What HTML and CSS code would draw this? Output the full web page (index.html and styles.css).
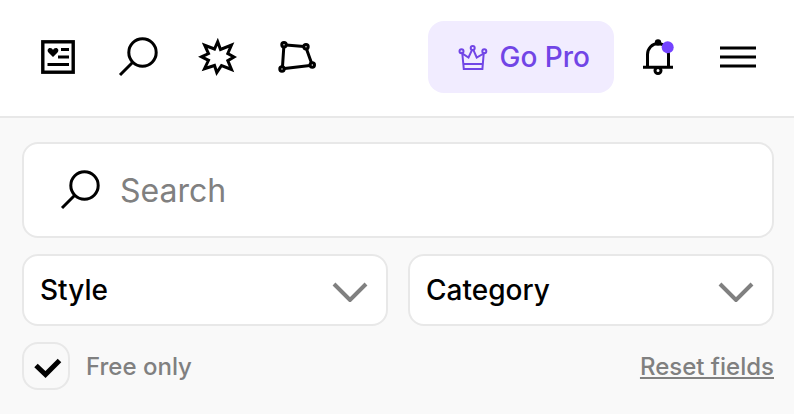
FILE: index.html
```
<!DOCTYPE html>
<html lang="en">
<head>
<meta charset="UTF-8">
<meta name="viewport" content="width=device-width, initial-scale=1">
<title>Search</title>
<link rel="stylesheet" href="styles.css">
</head>
<body>
    <header class="header">
        <nav class="nav">
            <a href="#news" class="icon-link" aria-label="News">
                <svg class="icon" viewBox="0 0 40 40">
                    <rect x="4.800" y="4.800" width="30.400" height="30.400" stroke-width="3.400"/>
                    <path d="M23 12.500h8M20 20h11M9.500 27.500h21.500"/>
                    <path class="solid" d="M15 20l-4.500-4.500c-1.800-2-.6-4.500 1.500-4.500 1.500 0 2.500.8 3 2 .5-1.200 1.500-2 3-2 2.100 0 3.300 2.500 1.500 4.500z"/>
                </svg>
            </a>
            <a href="#search" class="icon-link" aria-label="Search">
                <svg class="icon" viewBox="0 0 40 40">
                    <circle cx="24.500" cy="15.500" r="13.700"/>
                    <path d="M14.500 25.500L2 38"/>
                </svg>
            </a>
            <a href="#new" class="icon-link" aria-label="New">
                <svg class="icon" viewBox="0 0 40 40">
                    <path stroke-miterlimit="10" d="M19.700 4.700L22.500 12.500L33.500 8L29.800 16.500L36 20L29.800 23.700L33.500 32.500L23.500 28.500L18.800 35.500L16.500 28.500L6.500 31.700L10.500 23.300L3.500 19.800L10.500 16.500L6.700 8.300L16.500 12z"/>
                </svg>
            </a>
            <a href="#shapes" class="icon-link" aria-label="Shapes">
                <svg class="icon" viewBox="0 0 40 40">
                    <path d="M8 8l18 1.500M28.500 12l5 14M32 28.500L6.500 31.500M4.500 29.500L5.800 10"/>
                    <circle cx="6" cy="7.700" r="2.200"/>
                    <circle cx="28" cy="9.700" r="2.200"/>
                    <circle cx="34.300" cy="28" r="2.200"/>
                    <circle cx="4" cy="32" r="2.200"/>
                </svg>
            </a>
        </nav>
        <div class="account">
            <a href="#pro" class="pro">
                <svg class="crown" viewBox="0 0 30 30">
                    <circle cx="3.500" cy="9.300" r="2"/>
                    <circle cx="14.700" cy="6" r="2"/>
                    <circle cx="26.300" cy="9.300" r="2"/>
                    <path d="M4.300 11.500L5.800 27h18.600L25.700 11.500L18.700 15.500L15.500 8.200h-1.600L10.500 15.500zM5.500 22h19"/>
                </svg>
                Go Pro
            </a>
            <button type="button" class="icon-link" aria-label="Notifications">
                <svg class="icon" viewBox="0 0 40 40">
                    <path d="M9.500 30V17.500a10.500 11 0 0 1 21 0V30M5 30.300h30"/>
                    <circle cx="20" cy="33.500" r="3"/>
                    <circle class="solid" cx="20" cy="5.500" r="3.200"/>
                    <circle class="dot" cx="29.700" cy="10.300" r="6"/>
                </svg>
            </button>
            <button type="button" class="icon-link menu" aria-label="Menu">
                <svg class="icon" viewBox="0 0 40 40">
                    <path d="M2 11h36M2 20h36M2 29h36"/>
                </svg>
            </button>
        </div>
    </header>
    <form class="filters">
        <label class="search">
            <svg class="icon" viewBox="0 0 40 40">
                <circle cx="24.500" cy="15.500" r="13.700"/>
                <path d="M14.500 25.500L2 38"/>
            </svg>
            <input type="text" name="q" placeholder="Search" aria-label="Search">
        </label>
        <div class="selects">
            <div class="select">
                <select name="style" aria-label="Style">
                    <option>Style</option>
                </select>
                <svg class="chevron" viewBox="0 0 36 20"><path d="M2 2l16 16L34 2"/></svg>
            </div>
            <div class="select">
                <select name="category" aria-label="Category">
                    <option>Category</option>
                </select>
                <svg class="chevron" viewBox="0 0 36 20"><path d="M2 2l16 16L34 2"/></svg>
            </div>
        </div>
        <div class="options">
            <label class="free">
                <span class="checkbox">
                    <input type="checkbox" name="free" checked>
                    <svg class="check" viewBox="0 0 44 44"><path d="M12 21.500l9.500 9L35.500 16.500"/></svg>
                </span>
                Free only
            </label>
            <button type="reset" class="reset">Reset fields</button>
        </div>
    </form>
</body>
</html>
```
FILE: styles.css
```
* {
    box-sizing: border-box;
}

body {
    margin: 0;
    background: #fff;
    color: #000;
    font-family: Inter, sans-serif;
    font-size: 28px;
    font-weight: 500;
}

button, input, select {
    margin: 0;
    padding: 0;
    border: 0;
    background: none;
    color: inherit;
    font: inherit;
    appearance: none;
}

button, select, label {
    cursor: pointer;
}

svg {
    display: block;
    flex: none;
    fill: none;
    stroke: currentColor;
    stroke-width: 3;
}

/* header */
.header {
    display: flex;
    align-items: center;
    justify-content: space-between;
    padding: 21px 36px 23px 38px;
    border-bottom: 2px solid #e8e8e8;
}

.nav {
    display: flex;
    gap: 40px;
}

.account {
    display: flex;
    align-items: center;
    gap: 24px;
}

.icon-link {
    color: #000;
}

.icon {
    width: 40px;
    height: 40px;
}

.solid {
    fill: #000;
    stroke: none;
}

.dot {
    fill: #7443ff;
    stroke: none;
}

.pro {
    display: flex;
    align-items: center;
    gap: 12px;
    height: 72px;
    padding: 0 24px 0 30px;
    border-radius: 16px;
    background: #f1ecff;
    color: #7145e6;
    text-decoration: none;
}

.crown {
    width: 30px;
    height: 30px;
    stroke-width: 2;
}

.menu {
    margin-left: 16px;
}

/* filters */
.filters {
    display: flex;
    flex-direction: column;
    gap: 16px;
    padding: 24px 20px 24px 22px;
    background: #f9f9f9;
}

.search, .select, .checkbox {
    border: 2px solid #e8e8e8;
    border-radius: 16px;
}

.search {
    display: flex;
    align-items: center;
    gap: 20px;
    height: 96px;
    padding: 0 36px;
    background: #fff;
}

.search input {
    flex: 1;
    min-width: 0;
    outline: 0;
    font-size: 32px;
    font-weight: 400;
}

.search input::placeholder {
    color: #808080;
    opacity: 1;
}

.selects {
    display: grid;
    grid-template-columns: 1fr 1fr;
    gap: 20px;
}

.select {
    display: grid;
    align-items: center;
    height: 72px;
    background: #fff;
}

.select select, .chevron {
    grid-area: 1 / 1;
}

.select select {
    width: 100%;
    height: 100%;
    padding: 0 60px 0 16px;
}

.chevron {
    justify-self: end;
    width: 36px;
    height: 20px;
    margin-right: 18px;
    margin-top: 4px;
    stroke: #808080;
    stroke-width: 4;
    pointer-events: none;
}

.options {
    display: flex;
    align-items: center;
    justify-content: space-between;
    color: #808080;
    font-size: 24px;
}

.free {
    display: flex;
    align-items: center;
    gap: 16px;
}

.checkbox {
    display: grid;
    width: 48px;
    height: 48px;
}

.checkbox input, .check {
    grid-area: 1 / 1;
}

.check {
    width: 44px;
    height: 44px;
    color: #000;
    stroke-width: 5;
    visibility: hidden;
    pointer-events: none;
}

.checkbox input:checked + .check {
    visibility: visible;
}

.reset {
    text-decoration: underline;
}
```
